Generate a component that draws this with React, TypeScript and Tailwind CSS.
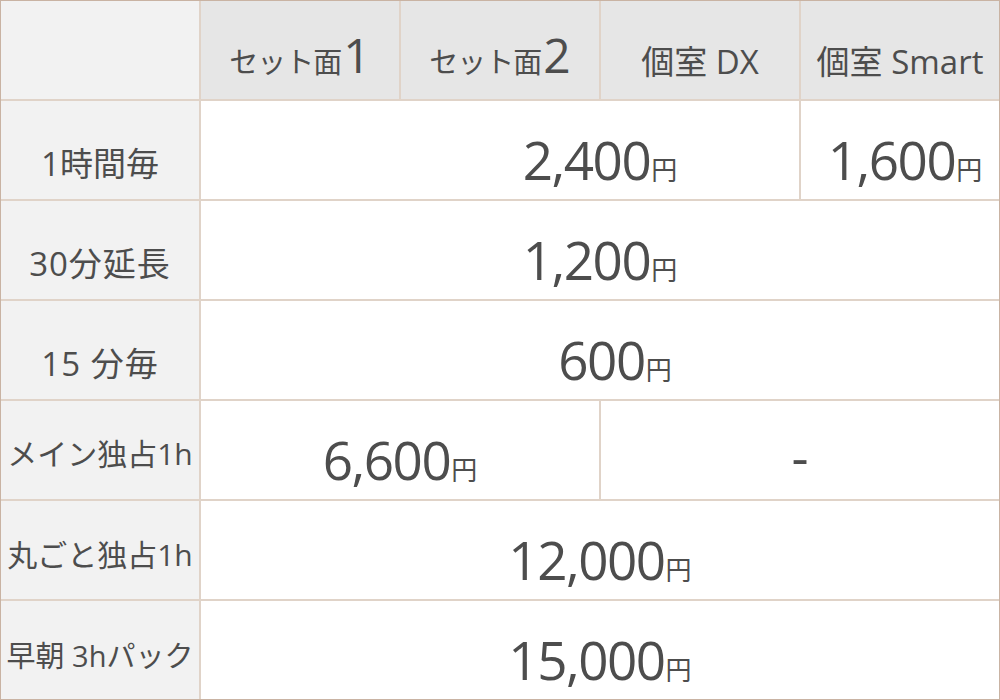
const font = "font-['Open_Sans','Noto_Sans_CJK_JP',sans-serif]";

function Price({ value }: { value: string }) {
  return (
    <span className="flex items-baseline text-[#4d4d4d]">
      <span className="text-[53px] font-medium tracking-[-1.5px] leading-none">{value}</span>
      <span className="text-[26px] leading-none ml-[1px]">円</span>
    </span>
  );
}

function Label({ children, size = "text-[33px]" }: { children: React.ReactNode; size?: string }) {
  return (
    <div className={`bg-[#f2f2f2] flex items-center justify-center pt-[26px] ${size} text-[#4d4d4d] leading-none whitespace-nowrap`}>
      {children}
    </div>
  );
}

function Head({ children }: { children: React.ReactNode }) {
  return (
    <div className="bg-[#e6e6e6] flex items-center justify-center pt-[22px] text-[33px] text-[#4d4d4d] leading-none whitespace-nowrap">
      {children}
    </div>
  );
}

export default function App() {
  return (
    <div className={`w-[1000px] h-[700px] bg-white ${font}`}>
      <div className="border border-[#c9b3a3] bg-[#e0d3c8]">
        <div className="grid grid-cols-[198px_198px_198px_198px_198px] grid-rows-[98px_98px_98px_98px_98px_98px_98px] gap-[2px]">
          {/* header */}
          <div className="bg-[#f2f2f2]" />
          <Head>
            <span className="text-[29px] tracking-[-1px]">セット面</span>
            <span className="text-[48px] font-medium leading-none -mt-[12px] ml-[2px]">1</span>
          </Head>
          <Head>
            <span className="text-[29px] tracking-[-1px]">セット面</span>
            <span className="text-[48px] font-medium leading-none -mt-[12px] ml-[2px]">2</span>
          </Head>
          <Head>個室 DX</Head>
          <Head>個室 Smart</Head>

          {/* 1時間毎 */}
          <Label>1時間毎</Label>
          <div className="col-span-3 bg-white flex items-center justify-center pl-[200px] pt-[18px]">
            <Price value="2,400" />
          </div>
          <div className="bg-white flex items-center justify-center pl-[10px] pt-[18px]">
            <Price value="1,600" />
          </div>

          {/* 30分延長 */}
          <Label>
            <span className="tracking-[1px]">30分延長</span>
          </Label>
          <div className="col-span-4 bg-white flex items-center justify-center pt-[18px]">
            <Price value="1,200" />
          </div>

          {/* 15 分毎 */}
          <Label>
            <span className="tracking-[1px]">15 分毎</span>
          </Label>
          <div className="col-span-4 bg-white flex items-center justify-center pl-[30px] pt-[18px]">
            <Price value="600" />
          </div>

          {/* メイン独占1h */}
          <Label size="text-[30px]">
            <span className="-mt-[18px]">メイン独占1h</span>
          </Label>
          <div className="col-span-2 bg-white flex items-center justify-center pt-[18px]">
            <Price value="6,600" />
          </div>
          <div className="col-span-2 bg-white flex items-center justify-center pt-[10px] text-[53px] font-medium text-[#4d4d4d] leading-none">
            -
          </div>

          {/* 丸ごと独占1h */}
          <Label size="text-[30px]">
            <span className="-mt-[16px]">丸ごと独占1h</span>
          </Label>
          <div className="col-span-4 bg-white flex items-center justify-center pt-[18px]">
            <Price value="12,000" />
          </div>

          {/* 早朝 3hパック */}
          <Label size="text-[29px]">
            <span className="-mt-[16px]">早朝 3hパック</span>
          </Label>
          <div className="col-span-4 bg-white flex items-center justify-center pt-[18px]">
            <Price value="15,000" />
          </div>
        </div>
      </div>
    </div>
  );
}
